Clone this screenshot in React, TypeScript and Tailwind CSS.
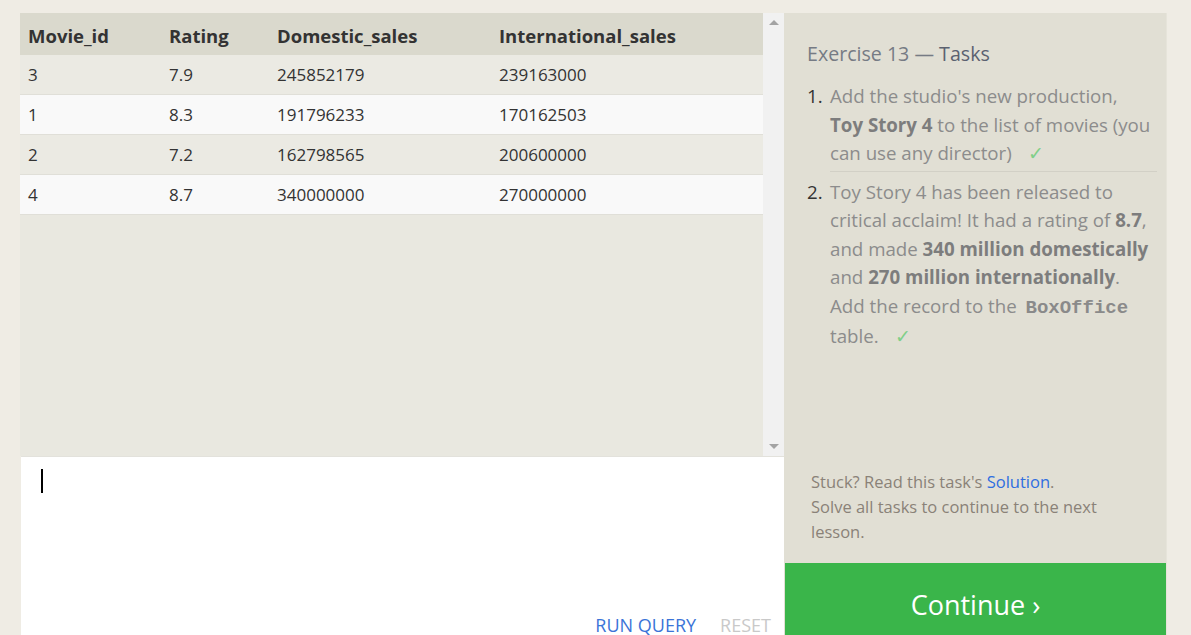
import React from "react";

const rows = [
  ["3", "7.9", "245852179", "239163000"],
  ["1", "8.3", "191796233", "170162503"],
  ["2", "7.2", "162798565", "200600000"],
  ["4", "8.7", "340000000", "270000000"],
];

function Check() {
  return <span className="ml-[16px] text-[19px] text-[#80cf88]">✓</span>;
}

export default function App() {
  return (
    <div
      className="flex h-[635px] w-[1191px] overflow-hidden bg-[#efece4] pl-[20px] pt-[13px]"
      style={{ fontFamily: '"Open Sans", "Noto Sans", sans-serif' }}
    >
      {/* Left panel */}
      <div className="flex w-[764px] flex-col">
        <div className="flex h-[443px] bg-[#e9e8e0]">
          <div className="flex-1">
            <div className="flex h-[42px] items-center bg-[#dad9cd] pt-[3px] text-[18.5px] font-bold text-[#333]">
              <div className="w-[149px] pl-[8px]">Movie_id</div>
              <div className="w-[108px]">Rating</div>
              <div className="w-[222px]">Domestic_sales</div>
              <div className="flex-1">International_sales</div>
            </div>
            {rows.map((r, i) => (
              <div
                key={i}
                className={`flex h-[40px] items-center border-b border-[#e0dfd8] text-[17px] text-[#333] ${
                  i % 2 === 0 ? "bg-[#ebeae3]" : "bg-[#f9f9f9]"
                }`}
              >
                <div className="w-[149px] pl-[8px]">{r[0]}</div>
                <div className="w-[108px]">{r[1]}</div>
                <div className="w-[222px]">{r[2]}</div>
                <div className="flex-1">{r[3]}</div>
              </div>
            ))}
          </div>
          <div className="flex w-[21px] flex-col items-center justify-between bg-[#f1f1f1] py-[7px]">
            <div className="h-0 w-0 border-x-[5px] border-b-[5px] border-x-transparent border-b-[#a3a3a3]" />
            <div className="h-0 w-0 border-x-[5px] border-t-[5px] border-x-transparent border-t-[#a3a3a3]" />
          </div>
        </div>
        <div className="relative ml-[1px] flex-1 border-t border-[#e3e2dc] bg-white">
          <div className="absolute left-[20px] top-[12px] h-[24px] w-[2px] bg-black" />
          <div className="absolute bottom-[-4px] right-[13px] flex gap-[24px] text-[18px]">
            <span className="text-[#3b74d8]">RUN QUERY</span>
            <span className="text-[#c9c9c9]">RESET</span>
          </div>
        </div>
      </div>

      {/* Right panel */}
      <div className="flex w-[383px] flex-col border-r border-[#e6e4da] bg-[#e1dfd4]">
        <div className="pl-[23px] pr-[9px] pt-[26px]">
          <div className="text-[19.6px] text-[#767b84]">
            Exercise 13 — <span className="text-[#5b6170]">Tasks</span>
          </div>
          <ol className="mt-[14px] text-[18.7px] leading-[28.5px] text-[#8c8c8c]">
            <li className="flex">
              <span className="w-[23px] shrink-0 text-[#333]">1.</span>
              <div className="flex-1 border-b border-[#d2d0c6] pb-[3px]">
                Add the studio's new production,
                <br />
                <b className="text-[#7d7d7d]">Toy Story 4</b> to the list of movies (you
                <br />
                can use any director)
                <Check />
              </div>
            </li>
            <li className="mt-[6px] flex">
              <span className="w-[23px] shrink-0 text-[#333]">2.</span>
              <div className="pr-[6px]">
                Toy Story 4 has been released to critical acclaim! It had a rating of{" "}
                <b className="text-[#7d7d7d]">8.7</b>, and made{" "}
                <b className="text-[#7d7d7d]">340 million domestically</b> and{" "}
                <b className="text-[#7d7d7d]">270 million internationally</b>. Add the record to the{" "}
                <b
                  className="px-[4px] text-[19px] text-[#8a8a8a]"
                  style={{ fontFamily: '"Liberation Mono", "DejaVu Sans Mono", monospace' }}
                >
                  BoxOffice
                </b>{" "}
                table.
                <Check />
              </div>
            </li>
          </ol>
        </div>
        <div className="flex-1" />
        <div className="px-[27px] pb-[19px] text-[16.5px] leading-[25px] text-[#8a8278]">
          Stuck? Read this task's <span className="text-[#2f6ee0]">Solution</span>.
          <br />
          Solve all tasks to continue to the next lesson.
        </div>
        <div className="ml-[1px] flex h-[72px] items-center justify-center bg-[#3ab54a] pt-[12px] text-[27px] text-white">
          Continue ›
        </div>
      </div>
    </div>
  );
}
